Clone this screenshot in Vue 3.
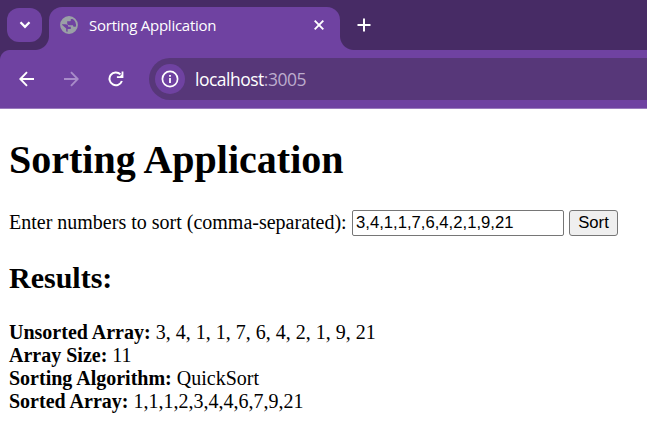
<script setup>
import { ref, computed } from 'vue'

const input = ref('3,4,1,1,7,6,4,2,1,9,21')
const numbers = ref(input.value.split(',').map(Number))
const sorted = computed(() => [...numbers.value].sort((a, b) => a - b))

function sort() {
  numbers.value = input.value.split(',').map(Number)
}
</script>

<template>
  <div class="browser">
    <header class="tabstrip">
      <div class="tab-search">
        <svg width="12" height="8" viewBox="0 0 12 8"><path d="M1.500 1.300 6 5.800l4.500-4.500" fill="none" stroke="#fff" stroke-width="2.300" /></svg>
      </div>
      <div class="tab">
        <svg class="globe" width="18" height="18" viewBox="0 0 18 18">
          <circle cx="9" cy="9" r="8" fill="#6f42a1" stroke="#9aa0a6" stroke-width="1.800" />
          <path d="M9.600 1C5 .5 1 4 1 8.300H5.200C7.300 8.300 8.300 9.100 8.300 10.800H10.800V13H7.600V16.900C12 17.300 15.900 14.800 16.700 10.800H14.600C13.500 10.800 13 10.300 13 9.200H9.300C7.900 9.200 7.200 8.400 7.200 7.300V5.300H9.600C10.400 5.300 10.800 4.700 10.800 4V3H12.600V1.800Z" fill="#9aa0a6" />
          <path d="M1.700 8.500 6.200 12.500V16.300C3.500 15.300 1.400 12.500 1.700 8.500Z" fill="#9aa0a6" />
        </svg>
        <span class="tab-title">Sorting Application</span>
        <svg class="close" width="12" height="12" viewBox="0 0 12 12"><path d="m1.700 1.700 8.600 8.600m0-8.600-8.600 8.600" stroke="#fff" stroke-width="1.900" /></svg>
      </div>
      <svg class="new-tab" width="14" height="14" viewBox="0 0 14 14"><path d="M7 .5v13M.5 7h13" stroke="#fff" stroke-width="2" /></svg>
    </header>

    <nav class="toolbar">
      <svg width="16" height="16" viewBox="0 0 16 16"><path d="M15 8H2M8 1.200 1.300 8 8 14.800" fill="none" stroke="#fff" stroke-width="1.900" /></svg>
      <svg class="forward" width="16" height="16" viewBox="0 0 16 16"><path d="M1 8h13M8 1.200 14.700 8 8 14.800" fill="none" stroke="#a88bc9" stroke-width="1.900" /></svg>
      <svg class="reload" width="16" height="16" viewBox="0 0 16 16"><path d="M13.900 10A6.400 6.400 0 1 1 12.500 3.400" fill="none" stroke="#fff" stroke-width="2" /><path d="M15.400.6v6.500H8.900V5.200h2.900l1.800-1.800V.6Z" fill="#fff" /></svg>
      <div class="omnibox">
        <div class="site-info">
          <svg width="18" height="18" viewBox="0 0 18 18"><circle cx="9" cy="9" r="7.600" fill="none" stroke="#fff" stroke-width="1.700" /><path d="M9 8v5M9 5v1.800" stroke="#fff" stroke-width="1.800" /></svg>
        </div>
        <span class="url">localhost<span class="port">:3005</span></span>
      </div>
    </nav>

    <main class="page">
      <h1>Sorting Application</h1>
      <form @submit.prevent="sort">
        <label for="numbers">Enter numbers to sort (comma-separated):</label>
        <input id="numbers" v-model="input" type="text" />
        <button type="submit">Sort</button>
      </form>
      <h2>Results:</h2>
      <div class="results">
        <div><b>Unsorted Array:</b> {{ numbers.join(', ') }}</div>
        <div><b>Array Size:</b> {{ numbers.length }}</div>
        <div><b>Sorting Algorithm:</b> QuickSort</div>
        <div><b>Sorted Array:</b> {{ sorted.join(',') }}</div>
      </div>
    </main>
  </div>
</template>

<style>
body {
  margin: 0;
  background: #fff;
  overflow: hidden;
}
</style>

<style scoped>
.browser {
  width: 647px;
  height: 433px;
  overflow: hidden;
  background: #fff;
}
svg {
  display: block;
  flex: none;
}
.tabstrip {
  box-sizing: border-box;
  display: flex;
  height: 50px;
  padding: 7px 0 0 7px;
  background: #472b65;
}
.tab-search {
  display: flex;
  align-items: center;
  justify-content: center;
  width: 35px;
  height: 34px;
  margin-top: 1px;
  border-radius: 12px;
  background: #6f42a1;
}
.tab {
  position: relative;
  box-sizing: border-box;
  display: flex;
  width: 291px;
  height: 43px;
  margin-left: 7px;
  padding-left: 11px;
  border-radius: 13px 13px 0 0;
  background: #6f42a1;
}
.tab::before,
.tab::after {
  content: '';
  position: absolute;
  bottom: 0;
  width: 14px;
  height: 14px;
}
.tab::before {
  left: -14px;
  background: radial-gradient(circle at 0 0, transparent 13.5px, #6f42a1 14.5px);
}
.tab::after {
  right: -14px;
  background: radial-gradient(circle at 100% 0, transparent 13.5px, #6f42a1 14.5px);
}
.globe {
  margin-top: 9px;
}
.tab-title {
  width: 214px;
  margin-left: 11px;
  padding-top: 8px;
  color: #fff;
  font: 15px/20px "Open Sans", sans-serif;
  letter-spacing: -0.25px;
  white-space: nowrap;
}
.close {
  margin: 12px 0 0 10px;
}
.new-tab {
  margin: 11px 0 0 17px;
}
.toolbar {
  box-sizing: border-box;
  display: flex;
  align-items: center;
  height: 59px;
  padding: 0 0 1px 19px;
  border-bottom: 1px solid #9a7bbd;
  background: radial-gradient(circle at 10px 10px, #6f42a1 9.5px, #472b65 10.500px) 0 0 / 10px 10px no-repeat,
    linear-gradient(#6f42a1, #6f42a1) 10px 0 no-repeat,
    linear-gradient(#6f42a1, #6f42a1) 0 10px no-repeat;
}
.forward {
  margin-left: 28px;
}
.reload {
  margin-left: 29px;
}
.omnibox {
  box-sizing: border-box;
  display: flex;
  flex: 1;
  align-items: center;
  height: 42px;
  margin: 1px 0 0 25px;
  padding-left: 6px;
  border-radius: 21px 0 0 21px;
  background: #573779;
}
.site-info {
  display: flex;
  align-items: center;
  justify-content: center;
  width: 30px;
  height: 30px;
  border-radius: 50%;
  background: #6f42a1;
}
.url {
  margin-left: 10px;
  padding-bottom: 1px;
  color: #fff;
  font: 17.500px/24px "Open Sans", sans-serif;
  letter-spacing: -0.500px;
}
.port {
  color: #bcaccd;
}
.page {
  padding: 28px 9px 0;
  color: #000;
  font: 20px/23px "Liberation Serif", serif;
}
h1 {
  margin: 0;
  font-size: 40px;
  line-height: 46px;
}
form {
  display: flex;
  align-items: center;
  margin-top: 26px;
  height: 27px;
}
label {
  white-space: pre;
  width: 343px;
}
input {
  box-sizing: border-box;
  width: 212px;
  height: 26px;
  margin: 0;
  padding: 1px 3px;
  border: 1px solid #767676;
  border-radius: 2px;
  background: #fff;
  color: #000;
  font: 16.670px "Liberation Sans", sans-serif;
}
button {
  box-sizing: border-box;
  width: 49px;
  height: 26px;
  margin: 0 0 0 5px;
  padding: 0;
  border: 1px solid #767676;
  border-radius: 3px;
  background: #efefef;
  color: #000;
  font: 16.670px "Liberation Sans", sans-serif;
}
h2 {
  margin: 25px 0 26px;
  font-size: 30px;
  line-height: 34px;
}
</style>
